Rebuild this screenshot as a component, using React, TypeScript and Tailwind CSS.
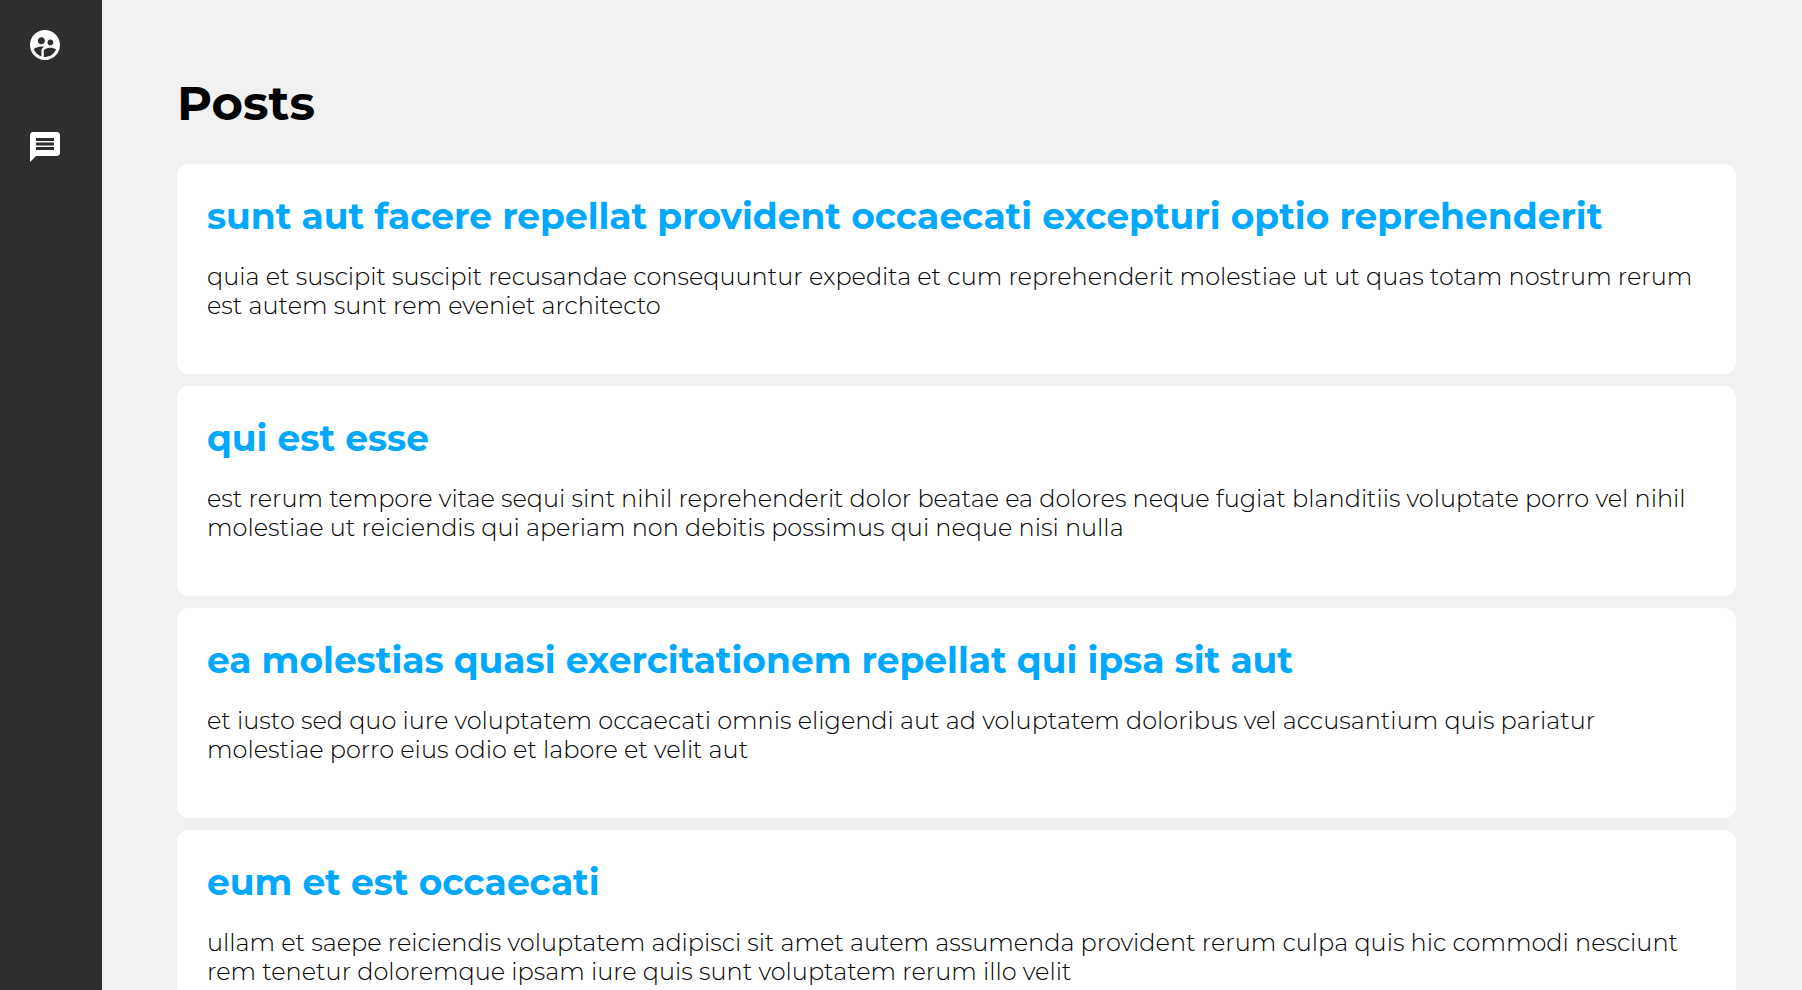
import { MdMessage, MdSupervisedUserCircle } from "react-icons/md";

type Post = { id: number; title: string; body: string };

const posts: Post[] = [
  {
    id: 1,
    title: "sunt aut facere repellat provident occaecati excepturi optio reprehenderit",
    body: "quia et suscipit suscipit recusandae consequuntur expedita et cum reprehenderit molestiae ut ut quas totam nostrum rerum est autem sunt rem eveniet architecto",
  },
  {
    id: 2,
    title: "qui est esse",
    body: "est rerum tempore vitae sequi sint nihil reprehenderit dolor beatae ea dolores neque fugiat blanditiis voluptate porro vel nihil molestiae ut reiciendis qui aperiam non debitis possimus qui neque nisi nulla",
  },
  {
    id: 3,
    title: "ea molestias quasi exercitationem repellat qui ipsa sit aut",
    body: "et iusto sed quo iure voluptatem occaecati omnis eligendi aut ad voluptatem doloribus vel accusantium quis pariatur molestiae porro eius odio et labore et velit aut",
  },
  {
    id: 4,
    title: "eum et est occaecati",
    body: "ullam et saepe reiciendis voluptatem adipisci sit amet autem assumenda provident rerum culpa quis hic commodi nesciunt rem tenetur doloremque ipsam iure quis sunt voluptatem rerum illo velit",
  },
];

function Sidebar() {
  return (
    <nav className="flex w-[102px] shrink-0 flex-col gap-[66px] bg-[#2d2f2e] p-[27px] text-white">
      <a href="#users" aria-label="Users" className="block size-9">
        <MdSupervisedUserCircle className="size-9" />
      </a>
      <a href="#posts" aria-label="Posts" className="block size-9">
        <MdMessage className="size-9" />
      </a>
    </nav>
  );
}

function PostCard({ post }: { post: Post }) {
  return (
    <article className="rounded-xl bg-white px-[30px] pt-[30px] pb-[54px]">
      <h2 className="text-4xl leading-[44px] font-bold text-[#00a8ff]">{post.title}</h2>
      <p className="mt-6 text-2xl leading-[29px] font-light text-black">{post.body}</p>
    </article>
  );
}

export default function App() {
  return (
    <div className="flex min-h-screen bg-[#f1f1f1] font-['Montserrat','Inter',sans-serif]">
      <Sidebar />
      <main className="min-w-0 flex-1 pt-[73px] pr-[66px] pl-[75px]">
        <h1 className="text-5xl leading-[60px] font-bold text-black">Posts</h1>
        <div className="mt-[31px] flex flex-col gap-3">
          {posts.map((post) => (
            <PostCard key={post.id} post={post} />
          ))}
        </div>
      </main>
    </div>
  );
}
